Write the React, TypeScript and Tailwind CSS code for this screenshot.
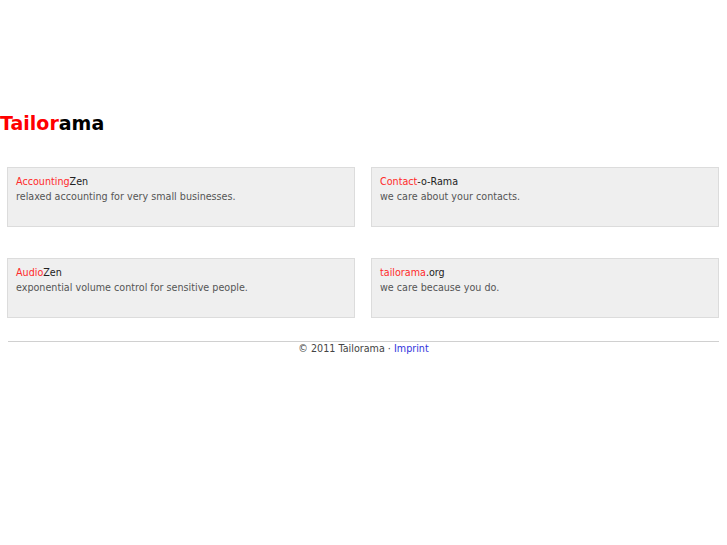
import React from "react";

const products = [
  { red: "Accounting", rest: "Zen", desc: "relaxed accounting for very small businesses." },
  { red: "Contact", rest: "-o-Rama", desc: "we care about your contacts." },
  { red: "Audio", rest: "Zen", desc: "exponential volume control for sensitive people." },
  { red: "tailorama", rest: ".org", desc: "we care because you do." },
];

export default function App() {
  return (
    <div className="min-h-[545px] bg-white font-['DejaVu_Sans',sans-serif] text-[9.6px]">
      <h1 className="pt-[111px] text-[19px] font-bold leading-[24px] text-black">
        <span className="text-[#ff0000]">Tailor</span>ama
      </h1>

      <div className="mt-[32px] grid w-[712px] grid-cols-2 gap-x-[16px] gap-y-[31px] pl-[7px] box-content">
        {products.map((p) => (
          <div key={p.red} className="h-[60px] border border-[#dcdcdc] bg-[#efefef] px-[8px] pt-[6px] leading-[15px]">
            <div className="text-[#222]">
              <a className="text-[#ff2a2a]">{p.red}</a>
              {p.rest}
            </div>
            <div className="text-[#555]">{p.desc}</div>
          </div>
        ))}
      </div>

      <div className="ml-[8px] mt-[23px] w-[711px] border-t border-[#d0d0d0] text-center leading-[14px] text-[#444]">
        © 2011 Tailorama · <a className="text-[#3333dd]">Imprint</a>
      </div>
    </div>
  );
}
